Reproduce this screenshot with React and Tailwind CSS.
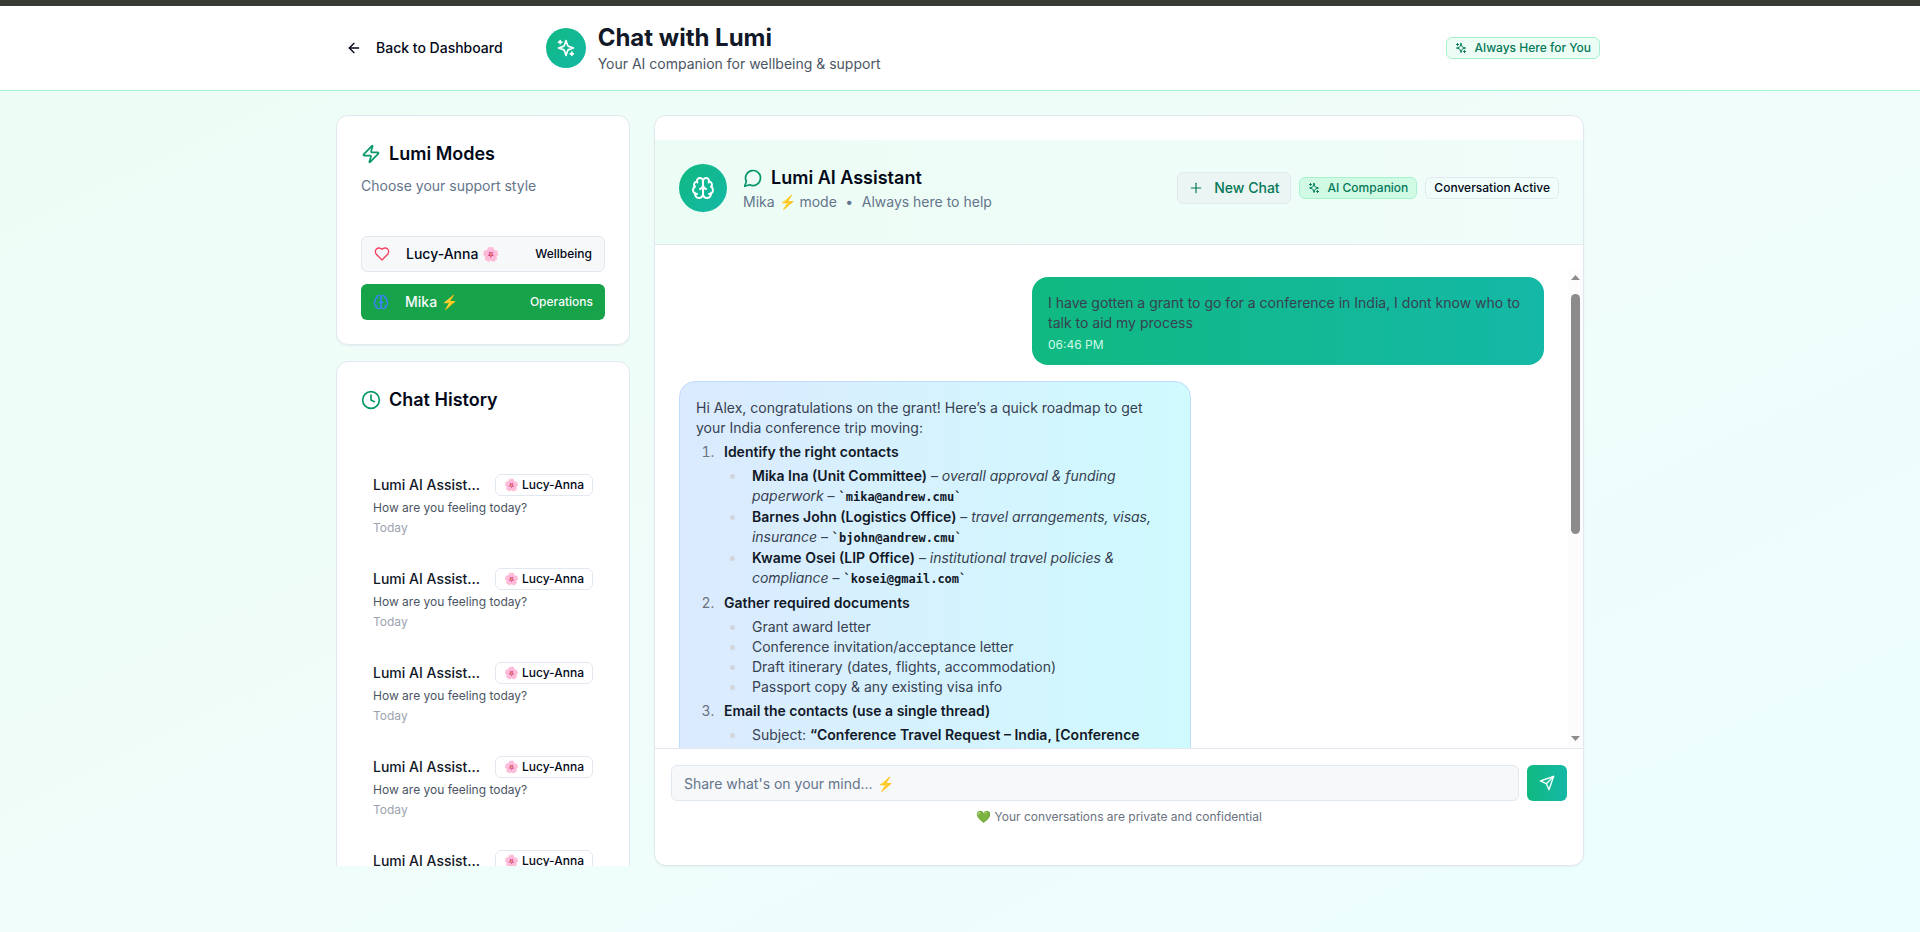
import React from "react";
import { Zap, Clock, Plus, ArrowLeft } from "lucide-react";

const Icon = ({ className, children }) => (
    <svg className={className} viewBox="0 0 24 24" fill="none" stroke="currentColor" strokeWidth="2" strokeLinecap="round" strokeLinejoin="round">
        {children}
    </svg>
)

const Sparkles = ({ className }) => (
    <Icon className={className}>
        <path d="m12 3-1.912 5.813a2 2 0 0 1-1.275 1.275L3 12l5.813 1.912a2 2 0 0 1 1.275 1.275L12 21l1.912-5.813a2 2 0 0 1 1.275-1.275L21 12l-5.813-1.912a2 2 0 0 1-1.275-1.275L12 3Z" />
        <path d="M5 3v4" />
        <path d="M19 17v4" />
        <path d="M3 5h4" />
        <path d="M17 19h4" />
    </Icon>
)

const Brain = ({ className }) => (
    <Icon className={className}>
        <path d="M12 5a3 3 0 1 0-5.997.125 4 4 0 0 0-2.526 5.77 4 4 0 0 0 .556 6.588A4 4 0 1 0 12 18Z" />
        <path d="M12 5a3 3 0 1 1 5.997.125 4 4 0 0 1 2.526 5.77 4 4 0 0 1-.556 6.588A4 4 0 1 1 12 18Z" />
        <path d="M15 13a4.5 4.5 0 0 1-3-4 4.5 4.5 0 0 1-3 4" />
        <path d="M17.599 6.5a3 3 0 0 0 .399-1.375" />
        <path d="M6.003 5.125A3 3 0 0 0 6.401 6.5" />
        <path d="M3.477 10.896a4 4 0 0 1 .585-.396" />
        <path d="M19.938 10.5a4 4 0 0 1 .585.396" />
        <path d="M6 18a4 4 0 0 1-1.967-.516" />
        <path d="M19.967 17.484A4 4 0 0 1 18 18" />
    </Icon>
)

const MessageCircle = ({ className }) => (
    <Icon className={className}>
        <path d="M7.9 20A9 9 0 1 0 4 16.1L2 22Z" />
    </Icon>
)

const Heart = ({ className }) => (
    <Icon className={className}>
        <path d="M19 14c1.49-1.46 3-3.21 3-5.5A5.5 5.5 0 0 0 16.5 3c-1.76 0-3 .5-4.5 2-1.5-1.5-2.74-2-4.5-2A5.5 5.5 0 0 0 2 8.5c0 2.3 1.5 4.05 3 5.5l7 7Z" />
    </Icon>
)

const Send = ({ className }) => (
    <Icon className={className}>
        <path d="m22 2-7 20-4-9-9-4Z" />
        <path d="M22 2 11 13" />
    </Icon>
)

const Badge = ({ className, children }) => (
    <div className={"flex items-center h-[22px] rounded-md border px-2 text-xs font-medium whitespace-nowrap " + className}>
        {children}
    </div>
)

const Header = () => {
    return (
        <div className="h-[85px] bg-white border-b border-[#a7f3d0]">
            <div className="w-[1280px] h-full mx-auto flex items-center justify-between">
                <div className="flex items-center pl-3">
                    <button className="flex items-center gap-3.5 h-9 pl-3.5 pr-3 text-sm font-medium text-[#020817]">
                        <ArrowLeft size={16} />
                        Back to Dashboard
                    </button>
                    <div className="flex items-center gap-3 ml-[31px]">
                        <div className="w-10 h-10 rounded-full flex items-center justify-center text-white bg-linear-to-br/srgb from-[#10b981] to-[#14b8a6]">
                            <Sparkles className="w-5 h-5" />
                        </div>
                        <div>
                            <h1 className="text-2xl font-bold text-[#111827]">Chat with Lumi</h1>
                            <p className="text-sm text-[#4b5563]">Your AI companion for wellbeing &amp; support</p>
                        </div>
                    </div>
                </div>
                <Badge className="bg-[#ecfdf5] border-[#a7f3d0] text-[#047857]">
                    <Sparkles className="w-3 h-3 mr-2" />
                    Always Here for You
                </Badge>
            </div>
        </div>
    )
}

const Modes = () => {
    return (
        <div className="bg-white rounded-xl border border-[#e2e8f0] shadow-xs p-6">
            <h2 className="flex items-center gap-2 text-lg leading-7 font-semibold">
                <Zap size={20} className="text-[#059669]" />
                Lumi Modes
            </h2>
            <p className="mt-2 text-sm text-[#64748b]">Choose your support style</p>
            <div className="mt-10 flex flex-col gap-3">
                <button className="flex items-center h-9 px-3 rounded-md border border-[#e2e8f0] bg-[#f7f8fa] text-sm font-medium">
                    <Heart className="w-4 h-4 mr-4 text-[#f43f5e]" />
                    Lucy-Anna 🌸
                    <span className="ml-auto text-xs">Wellbeing</span>
                </button>
                <button className="flex items-center h-9 px-3 rounded-md bg-[#16a34a] text-sm font-medium text-[#f8fafc]">
                    <Brain className="w-4 h-4 mr-4 text-[#3b82f6]" />
                    Mika ⚡
                    <span className="ml-auto text-xs">Operations</span>
                </button>
            </div>
        </div>
    )
}

const History = () => {
    const chats = [1, 2, 3, 4, 5]
    return (
        <div className="bg-white rounded-xl border border-[#e2e8f0] shadow-xs p-6">
            <h2 className="flex items-center gap-2 text-lg leading-7 font-semibold">
                <Clock size={20} className="text-[#059669]" />
                Chat History
            </h2>
            <div className="mt-12 flex flex-col gap-2">
                {chats.map(item => (
                    <div key={item} className="p-3">
                        <div className="flex items-center justify-between">
                            <h4 className="w-[110px] truncate text-sm font-medium text-[#111827]">Lumi AI Assistant</h4>
                            <Badge className="border-[#e2e8f0]">🌸 Lucy-Anna</Badge>
                        </div>
                        <p className="mt-1 text-xs text-[#4b5563]">How are you feeling today?</p>
                        <p className="mt-1 text-xs text-[#9ca3af]">Today</p>
                    </div>
                ))}
            </div>
        </div>
    )
}

const Contact = ({ name, about, mail }) => (
    <li className="pl-1.5 h-[41px]">
        <strong className="font-semibold text-[#111827]">{name}</strong> – <em className="tracking-[-0.04px]">{about}</em> –{' '}
        <code className="text-xs font-semibold text-[#111827] font-['DejaVu_Sans_Mono',monospace]">`{mail}`</code>
    </li>
)

const Step = ({ title, children }) => (
    <li className="pl-1.5 mt-1">
        <strong className="font-semibold text-[#111827]">{title}</strong>
        <ul className="list-disc pl-[22px] mt-1 marker:text-[#d1d5db]">{children}</ul>
    </li>
)

const Messages = () => {
    return (
        <div className="flex-1 min-w-0 flex flex-col gap-4 pl-6 pr-6 pt-2 overflow-hidden text-sm text-[#374151]">
            <div className="self-end shrink-0 w-[512px] h-[88px] rounded-2xl px-4 pt-4 bg-linear-to-r/srgb from-[#10b981] to-[#14b8a6]">
                <p>I have gotten a grant to go for a conference in India, I dont know who to talk to aid my process</p>
                <p className="mt-1 text-xs text-[#d1fae5]">06:46 PM</p>
            </div>
            <div className="shrink-0 w-[512px] rounded-2xl border border-[#bfdbfe] px-4 pt-4 pb-10 bg-linear-to-r/srgb from-[#dbeafe] to-[#cffafe]">
                <p>Hi Alex, congratulations on the grant! Here’s a quick roadmap to get your India conference trip moving:</p>
                <ol className="list-decimal pl-[22px] marker:text-[#6b7280]">
                    <Step title="Identify the right contacts">
                        <Contact name="Mika Ina (Unit Committee)" about="overall approval & funding paperwork" mail="mika@andrew.cmu" />
                        <Contact name="Barnes John (Logistics Office)" about="travel arrangements, visas, insurance" mail="bjohn@andrew.cmu" />
                        <Contact name="Kwame Osei (LIP Office)" about="institutional travel policies & compliance" mail="kosei@gmail.com" />
                    </Step>
                    <Step title="Gather required documents">
                        <li className="pl-1.5">Grant award letter</li>
                        <li className="pl-1.5">Conference invitation/acceptance letter</li>
                        <li className="pl-1.5">Draft itinerary (dates, flights, accommodation)</li>
                        <li className="pl-1.5">Passport copy &amp; any existing visa info</li>
                    </Step>
                    <Step title="Email the contacts (use a single thread)">
                        <li className="pl-1.5">Subject: <strong className="font-semibold text-[#111827]">“Conference Travel Request – India, [Conference</strong></li>
                    </Step>
                </ol>
            </div>
        </div>
    )
}

const ScrollBar = () => (
    <div className="w-[15px] bg-[#fcfcfc] flex flex-col items-center pt-1.5 pb-[7px]">
        <svg className="w-[9px] h-[5px]" viewBox="0 0 9 5"><path d="M4.5 0 9 5H0Z" fill="#8b8b8b" /></svg>
        <div className="mt-3.5 w-[9px] h-60 rounded-full bg-[#8b8b8b]"></div>
        <svg className="mt-auto w-[9px] h-[5px]" viewBox="0 0 9 5"><path d="M4.5 5 9 0H0Z" fill="#8b8b8b" /></svg>
    </div>
)

const Chat = () => {
    return (
        <div className="flex-1 min-w-0 h-[751px] flex flex-col bg-white rounded-xl border border-[#e2e8f0] shadow-xs overflow-hidden pt-6">
            <div className="shrink-0 h-[105px] px-6 pt-6 pb-8 border-b border-[#e2e8f0] flex items-center justify-between bg-linear-to-r/srgb from-[#ecfdf5] to-[#f0fdfa]">
                <div className="flex items-center gap-4">
                    <div className="w-12 h-12 rounded-full flex items-center justify-center text-white bg-linear-to-br/srgb from-[#10b981] to-[#14b8a6]">
                        <Brain className="w-6 h-6" />
                    </div>
                    <div>
                        <h2 className="flex items-center gap-2 text-lg leading-7 font-semibold">
                            <MessageCircle className="w-5 h-5 text-[#059669]" />
                            Lumi AI Assistant
                        </h2>
                        <p className="flex items-center gap-[8.5px] text-sm text-[#64748b]">
                            <span>Mika ⚡ mode</span><span>•</span><span>Always here to help</span>
                        </p>
                    </div>
                </div>
                <div className="flex items-center gap-2">
                    <button className="flex items-center gap-2.5 h-8 px-2.5 rounded-md border border-[#e2e8f0] bg-[#ebf5f4] text-sm font-medium text-[#047857]">
                        <Plus size={16} strokeWidth={1.75} />
                        New Chat
                    </button>
                    <Badge className="bg-[#d1fae5] border-[#a7f3d0] text-[#047857]">
                        <Sparkles className="w-3 h-3 mr-2" />
                        AI Companion
                    </Badge>
                    <Badge className="border-[#e2e8f0]">Conversation Active</Badge>
                </div>
            </div>
            <div className="flex mt-6 h-[479px] shrink-0">
                <Messages />
                <ScrollBar />
            </div>
            <div className="flex-1 border-t border-[#e2e8f0] p-4">
                <div className="flex gap-2">
                    <div className="flex-1 flex items-center h-9 px-3 pt-0.5 rounded-md border border-[#e2e8f0] bg-[#f7f8fa] text-sm text-[#64748b]">Share what's on your mind... ⚡</div>
                    <button className="w-10 h-9 rounded-md flex items-center justify-center text-white bg-linear-to-r/srgb from-[#10b981] to-[#14b8a6]">
                        <Send className="w-4 h-4" />
                    </button>
                </div>
                <p className="mt-2 text-xs text-center text-[#6b7280]">💚 Your conversations are private and confidential</p>
            </div>
        </div>
    )
}

const App = () => {
    return (
        <div className="h-[932px] overflow-hidden font-['Inter',sans-serif] text-[#020817] bg-linear-to-br/srgb from-[#ecfdf5] via-[#f0fdfa] to-[#ecfeff]">
            <div className="h-1.5 bg-[#383b33]"></div>
            <Header />
            <div className="w-[1280px] mx-auto px-4 pt-6 flex gap-6">
                <div className="w-[294px] h-[751px] overflow-hidden flex flex-col gap-4">
                    <Modes />
                    <History />
                </div>
                <Chat />
            </div>
        </div>
    )
}
export default App
